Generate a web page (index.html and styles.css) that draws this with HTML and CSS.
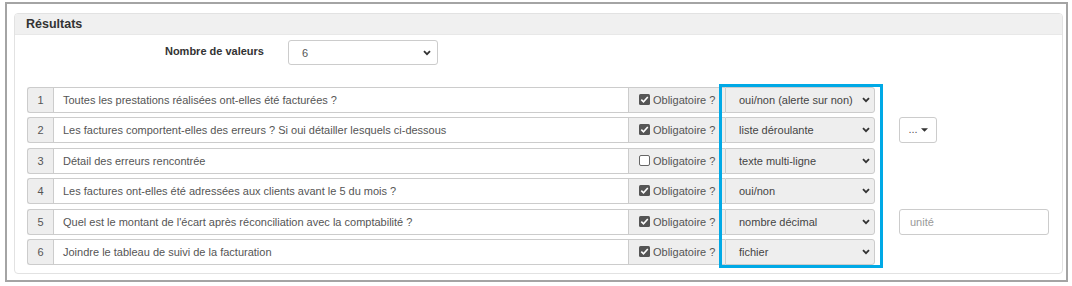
FILE: index.html
```html
<!DOCTYPE html>
<html lang="fr">
<head>
<meta charset="utf-8">
<link rel="stylesheet" href="styles.css">
</head>
<body>
<div class="frame">
  <div class="panel">
    <div class="panel-heading">Résultats</div>
    <div class="panel-body">
      <div class="form-line">
        <div class="control-label">Nombre de valeurs</div>
        <div class="select count-select"><span>6</span><svg class="chev" viewBox="0 0 8 6" width="8" height="6"><path d="M1 1.2 L4 4.2 L7 1.2" fill="none" stroke="#333" stroke-width="1.8"/></svg></div>
      </div>
      <div class="rows">
        <div class="highlight"></div>

        <div class="row">
          <div class="group">
            <div class="addon num">1</div>
            <div class="text">Toutes les prestations réalisées ont-elles été facturées ?</div>
            <div class="addon chk"><svg class="box" viewBox="0 0 11 11" width="11" height="11"><rect x="0" y="0" width="11" height="11" rx="1.5" fill="#555"/><path d="M2.3 5.6 L4.5 7.8 L8.8 3" fill="none" stroke="#fff" stroke-width="1.6"/></svg>Obligatoire ?</div>
            <div class="select type"><span>oui/non (alerte sur non)</span><svg class="chev" viewBox="0 0 8 6" width="8" height="6"><path d="M1 1.2 L4 4.2 L7 1.2" fill="none" stroke="#333" stroke-width="1.8"/></svg></div>
          </div>
          <div class="extra"></div>
        </div>

        <div class="row">
          <div class="group">
            <div class="addon num">2</div>
            <div class="text">Les factures comportent-elles des erreurs ? Si oui détailler lesquels ci-dessous</div>
            <div class="addon chk"><svg class="box" viewBox="0 0 11 11" width="11" height="11"><rect x="0" y="0" width="11" height="11" rx="1.5" fill="#555"/><path d="M2.3 5.6 L4.5 7.8 L8.8 3" fill="none" stroke="#fff" stroke-width="1.6"/></svg>Obligatoire ?</div>
            <div class="select type"><span>liste déroulante</span><svg class="chev" viewBox="0 0 8 6" width="8" height="6"><path d="M1 1.2 L4 4.2 L7 1.2" fill="none" stroke="#333" stroke-width="1.8"/></svg></div>
          </div>
          <div class="extra"><div class="btn-dots">...<svg class="caret" viewBox="0 0 8 4" width="7" height="4"><path d="M0 0 H8 L4 4 Z" fill="#333"/></svg></div></div>
        </div>

        <div class="row">
          <div class="group">
            <div class="addon num">3</div>
            <div class="text">Détail des erreurs rencontrée</div>
            <div class="addon chk"><svg class="box" viewBox="0 0 11 11" width="11" height="11"><rect x="0.5" y="0.5" width="10" height="10" rx="1.5" fill="#fff" stroke="#666"/></svg>Obligatoire ?</div>
            <div class="select type"><span>texte multi-ligne</span><svg class="chev" viewBox="0 0 8 6" width="8" height="6"><path d="M1 1.2 L4 4.2 L7 1.2" fill="none" stroke="#333" stroke-width="1.8"/></svg></div>
          </div>
          <div class="extra"></div>
        </div>

        <div class="row">
          <div class="group">
            <div class="addon num">4</div>
            <div class="text">Les factures ont-elles été adressées aux clients avant le 5 du mois ?</div>
            <div class="addon chk"><svg class="box" viewBox="0 0 11 11" width="11" height="11"><rect x="0" y="0" width="11" height="11" rx="1.5" fill="#555"/><path d="M2.3 5.6 L4.5 7.8 L8.8 3" fill="none" stroke="#fff" stroke-width="1.6"/></svg>Obligatoire ?</div>
            <div class="select type"><span>oui/non</span><svg class="chev" viewBox="0 0 8 6" width="8" height="6"><path d="M1 1.2 L4 4.2 L7 1.2" fill="none" stroke="#333" stroke-width="1.8"/></svg></div>
          </div>
          <div class="extra"></div>
        </div>

        <div class="row">
          <div class="group">
            <div class="addon num">5</div>
            <div class="text">Quel est le montant de l'écart après réconciliation avec la comptabilité ?</div>
            <div class="addon chk"><svg class="box" viewBox="0 0 11 11" width="11" height="11"><rect x="0" y="0" width="11" height="11" rx="1.5" fill="#555"/><path d="M2.3 5.6 L4.5 7.8 L8.8 3" fill="none" stroke="#fff" stroke-width="1.6"/></svg>Obligatoire ?</div>
            <div class="select type"><span>nombre décimal</span><svg class="chev" viewBox="0 0 8 6" width="8" height="6"><path d="M1 1.2 L4 4.2 L7 1.2" fill="none" stroke="#333" stroke-width="1.8"/></svg></div>
          </div>
          <div class="extra"><div class="unit">unité</div></div>
        </div>

        <div class="row">
          <div class="group">
            <div class="addon num">6</div>
            <div class="text">Joindre le tableau de suivi de la facturation</div>
            <div class="addon chk"><svg class="box" viewBox="0 0 11 11" width="11" height="11"><rect x="0" y="0" width="11" height="11" rx="1.5" fill="#555"/><path d="M2.3 5.6 L4.5 7.8 L8.8 3" fill="none" stroke="#fff" stroke-width="1.6"/></svg>Obligatoire ?</div>
            <div class="select type"><span>fichier</span><svg class="chev" viewBox="0 0 8 6" width="8" height="6"><path d="M1 1.2 L4 4.2 L7 1.2" fill="none" stroke="#333" stroke-width="1.8"/></svg></div>
          </div>
          <div class="extra"></div>
        </div>
      </div>
    </div>
  </div>
</div>
</body>
</html>
```

FILE: styles.css
```css
html, body {
  margin: 0;
  padding: 0;
  background: #fff;
}
body {
  padding: 2px 0 0 5px;
  font-family: "Liberation Sans", Arial, sans-serif;
  font-size: 11px;
  color: #555;
}
.frame {
  box-sizing: border-box;
  width: 1063px;
  height: 280px;
  border: 2px solid #a4a4a4;
  padding: 9px 3px 0 7px;
}
.panel {
  box-sizing: border-box;
  height: 261px;
  border: 1px solid #e2e2e2;
  border-radius: 4px;
}
.panel-heading {
  box-sizing: border-box;
  height: 21px;
  background: #f0f0f0;
  border-bottom: 1px solid #e8e8e8;
  padding: 3px 0 0 11px;
  font-size: 12.5px;
  font-weight: bold;
  color: #333;
  border-radius: 3px 3px 0 0;
}
.panel-body {
  padding: 5px 0 0 12px;
}
.form-line {
  display: flex;
  align-items: flex-start;
  gap: 24px;
}
.control-label {
  width: 237px;
  text-align: right;
  font-weight: bold;
  font-size: 11px;
  color: #333;
  padding-top: 5px;
}
.select {
  box-sizing: border-box;
  display: flex;
  align-items: center;
  justify-content: space-between;
  border: 1px solid #ccc;
  border-radius: 3px;
  white-space: nowrap;
}
.count-select {
  width: 150px;
  height: 25px;
  padding: 0 6px 0 13px;
  background: #fff;
  color: #555;
}
.rows {
  position: relative;
  margin-top: 22px;
  display: flex;
  flex-direction: column;
  gap: 4.4px;
}
.highlight {
  position: absolute;
  left: 692px;
  top: -3px;
  width: 164px;
  height: 184px;
  box-sizing: border-box;
  border: 3px solid #00a9e6;
  z-index: 2;
  pointer-events: none;
}
.row {
  display: flex;
  gap: 24px;
  height: 26px;
}
.group {
  display: flex;
  width: 848px;
  height: 26px;
}
.addon {
  box-sizing: border-box;
  background: #eee;
  border: 1px solid #ccc;
  display: flex;
  align-items: center;
  white-space: nowrap;
}
.num {
  width: 26px;
  justify-content: center;
  border-radius: 3px 0 0 3px;
  border-right: none;
  color: #555;
}
.text {
  box-sizing: border-box;
  width: 576px;
  border: 1px solid #ccc;
  background: #fff;
  display: flex;
  align-items: center;
  padding-left: 9px;
  white-space: nowrap;
  overflow: hidden;
}
.chk {
  width: 96px;
  border-left: none;
  border-right: none;
  padding-left: 10px;
  gap: 3px;
  color: #555;
}
.box {
  flex: none;
  margin-top: -1px;
}
.type {
  flex: 1;
  background: #eee;
  border-radius: 0 3px 3px 0;
  padding: 0 4px 0 13px;
  color: #444;
}
.chev {
  flex: none;
}
.extra {
  width: 150px;
  display: flex;
}
.btn-dots {
  box-sizing: border-box;
  width: 38px;
  height: 26px;
  border: 1px solid #ccc;
  border-radius: 3px;
  display: flex;
  align-items: center;
  justify-content: center;
  gap: 3px;
  color: #555;
  font-size: 11px;
  padding-bottom: 2px;
}
.caret {
  margin-top: 2px;
}
.unit {
  box-sizing: border-box;
  width: 150px;
  height: 26px;
  border: 1px solid #ccc;
  border-radius: 3px;
  display: flex;
  align-items: center;
  padding-left: 10px;
  color: #999;
}
```
